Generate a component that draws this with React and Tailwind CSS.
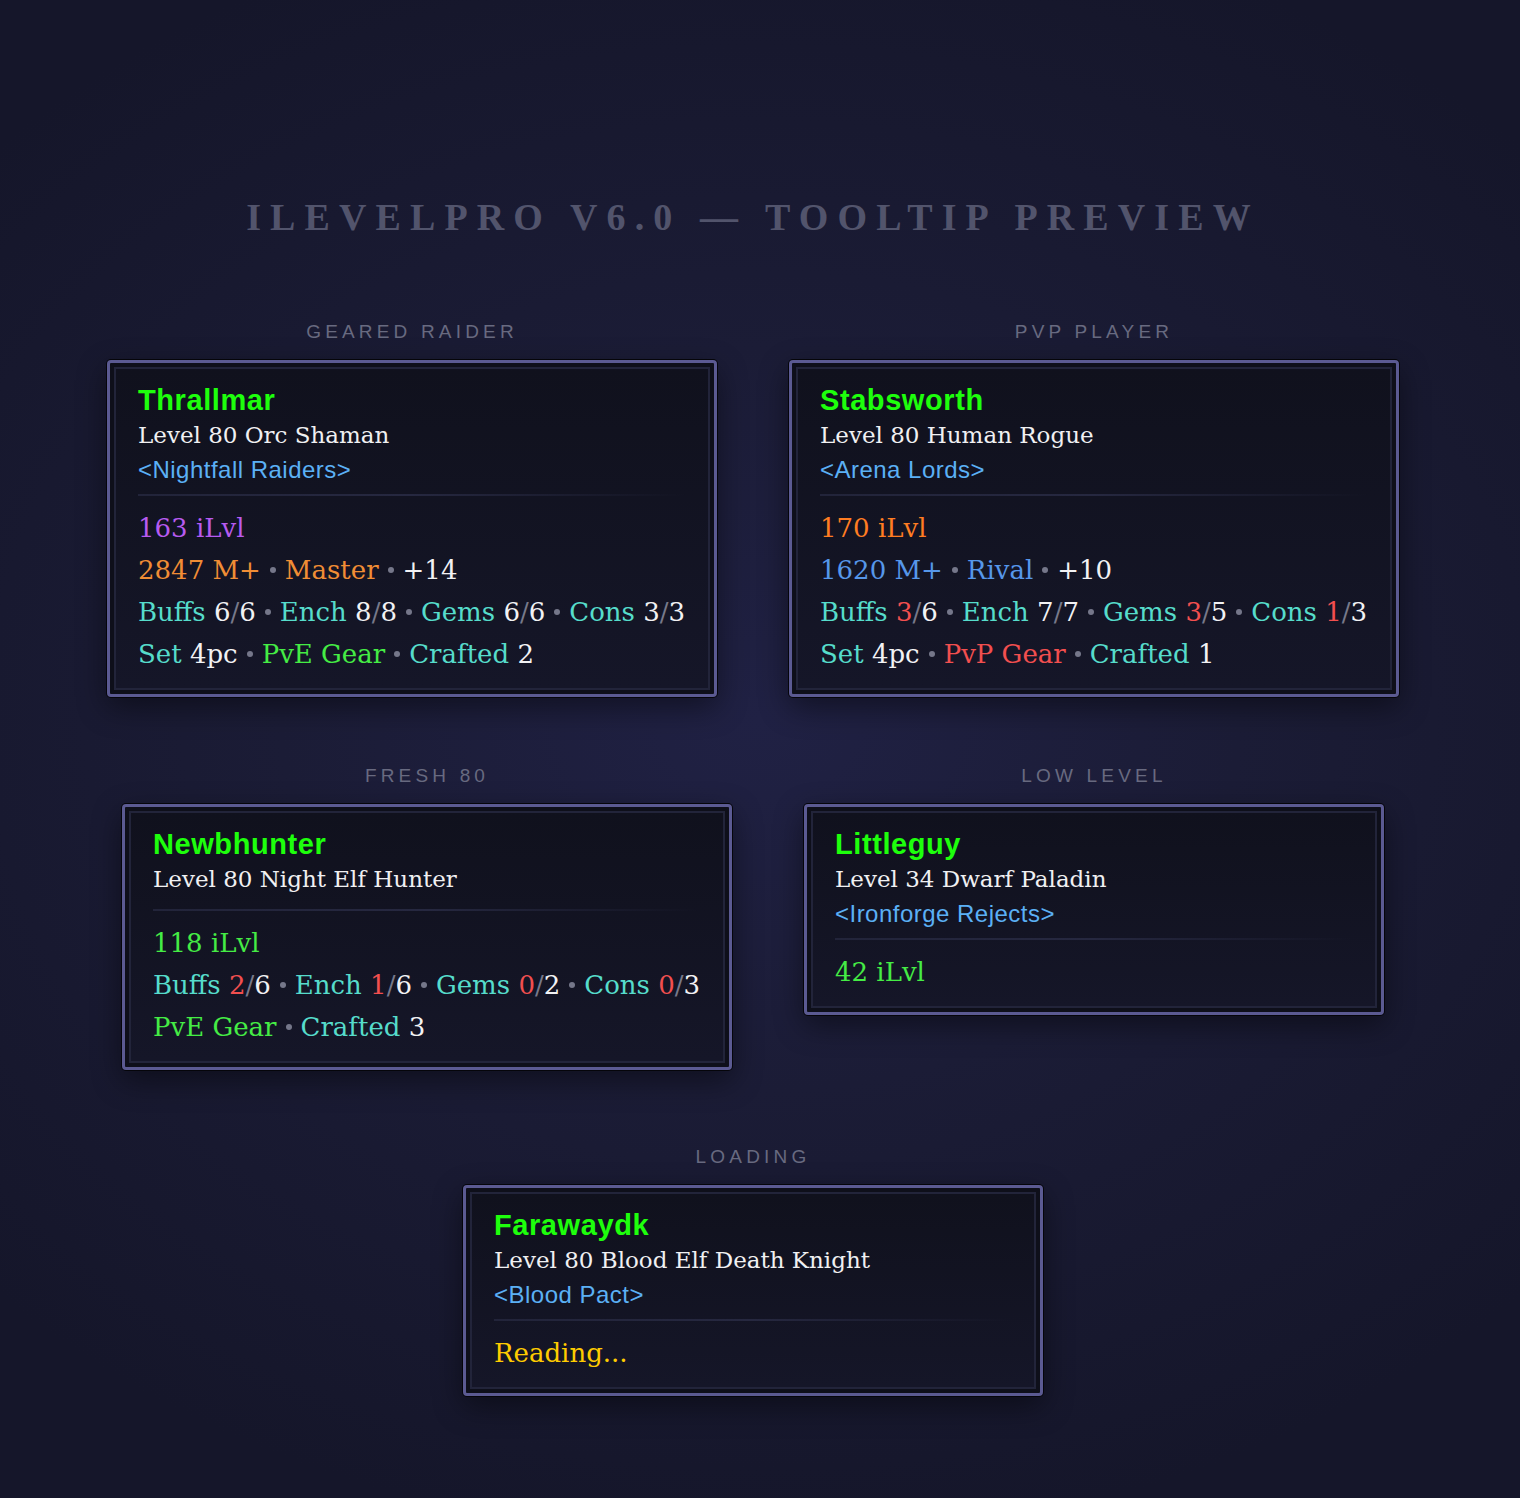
import React from "react";

const serif = "font-['DejaVu_Serif',Georgia,serif]";
const titleFont = "font-['Liberation_Serif',Georgia,serif]";
const sans = "font-['Liberation_Sans',Arial,sans-serif]";

// tooltip text colours
const C = {
  white: "text-[#f2f2f4]",
  teal: "text-[#56dccb]",
  purple: "text-[#b75bf0]",
  orange: "text-[#f08d35]",
  amber: "text-[#ff7d22]",
  blue: "text-[#5697ea]",
  green: "text-[#45ec45]",
  red: "text-[#f24f4f]",
  gold: "text-[#ffcc00]",
};

const count = (label, have, total) => [
  [label, C.teal],
  [" "],
  [String(have), have < total ? C.red : C.white],
  ["/", "text-[#77798a]"],
  [String(total), C.white],
];

const tag = (label, value) => [
  [label, C.teal],
  [" "],
  [value, C.white],
];

const previews = [
  {
    label: "Geared Raider",
    name: "Thrallmar",
    level: "Level 80 Orc Shaman",
    guild: "Nightfall Raiders",
    rows: [
      [[["163 iLvl", C.purple]]],
      [[["2847 M+", C.orange]], [["Master", C.orange]], [["+14", C.white]]],
      [count("Buffs", 6, 6), count("Ench", 8, 8), count("Gems", 6, 6), count("Cons", 3, 3)],
      [tag("Set", "4pc"), [["PvE Gear", C.green]], tag("Crafted", "2")],
    ],
  },
  {
    label: "PvP Player",
    name: "Stabsworth",
    level: "Level 80 Human Rogue",
    guild: "Arena Lords",
    rows: [
      [[["170 iLvl", C.amber]]],
      [[["1620 M+", C.blue]], [["Rival", C.blue]], [["+10", C.white]]],
      [count("Buffs", 3, 6), count("Ench", 7, 7), count("Gems", 3, 5), count("Cons", 1, 3)],
      [tag("Set", "4pc"), [["PvP Gear", C.red]], tag("Crafted", "1")],
    ],
  },
  {
    label: "Fresh 80",
    name: "Newbhunter",
    level: "Level 80 Night Elf Hunter",
    rows: [
      [[["118 iLvl", C.green]]],
      [count("Buffs", 2, 6), count("Ench", 1, 6), count("Gems", 0, 2), count("Cons", 0, 3)],
      [[["PvE Gear", C.green]], tag("Crafted", "3")],
    ],
  },
  {
    label: "Low Level",
    name: "Littleguy",
    level: "Level 34 Dwarf Paladin",
    guild: "Ironforge Rejects",
    rows: [[[["42 iLvl", C.green]]]],
  },
];

const loading = {
  label: "Loading",
  name: "Farawaydk",
  level: "Level 80 Blood Elf Death Knight",
  guild: "Blood Pact",
  rows: [[[["Reading...", C.gold]]]],
};

function StatRow({ groups }) {
  return (
    <div className={`${serif} text-[26px] leading-[42px] whitespace-nowrap`}>
      {groups.map((parts, i) => (
        <React.Fragment key={i}>
          {i > 0 && (
            <span className="mx-[9px] mb-[4px] inline-block h-[6px] w-[6px] rounded-full bg-[#75778a] align-middle" />
          )}
          {parts.map(([text, cls], j) => (
            <span key={j} className={cls}>
              {text}
            </span>
          ))}
        </React.Fragment>
      ))}
    </div>
  );
}

function Tooltip({ name, level, guild, rows }) {
  return (
    <div className="min-w-[580px] rounded-[4px] border-[3px] border-[#5b5a92] bg-[#0e0f1a] p-[4px] shadow-[0_0_0_1px_#05050a,0_10px_30px_rgba(0,0,0,0.45)]">
      <div className="border-2 border-[#22243a] bg-gradient-to-b from-[#10111d] to-[#151628] pl-[22px] pr-[23px] pt-[14px] pb-[13px]">
        <div className={`${sans} text-[29px] leading-[34px] font-bold tracking-[0.02em] text-[#1eff0c]`}>{name}</div>
        <div className={`${serif} text-[23px] leading-[36px] text-[#f0f0f2]`}>{level}</div>
        {guild ? (
          <div className={`${sans} text-[24px] leading-[34px] tracking-[0.02em] text-[#5bb0f5]`}>&lt;{guild}&gt;</div>
        ) : (
          <div className="h-[5px]" />
        )}
        <div className="mt-[7px] mb-[11px] h-[2px] bg-gradient-to-r from-[#22243a] via-[#262840] to-transparent" />
        {rows.map((groups, i) => (
          <StatRow key={i} groups={groups} />
        ))}
      </div>
    </div>
  );
}

function Preview({ label, ...card }) {
  return (
    <div className="flex flex-col items-center">
      <div className={`${sans} mb-3.5 text-[19px] leading-[28px] uppercase tracking-[0.22em] text-[#686a80]`}>
        {label}
      </div>
      <Tooltip {...card} />
    </div>
  );
}

export default function App() {
  return (
    <div className="min-h-screen w-full bg-[#17182b] bg-[radial-gradient(ellipse_70%_55%_at_50%_48%,#202144_0%,#1b1c36_45%,#15162a_100%)] pr-[14px] pt-[198px] pb-[103px]">
      <h1 className={`${titleFont} text-center text-[38px] leading-[38px] font-bold uppercase tracking-[0.24em] text-[#52546c]`}>
        iLevelPro v6.0 — Tooltip Preview
      </h1>

      <div className="mt-[82px] flex flex-wrap items-start justify-center gap-x-[72px] gap-y-[65px]">
        {previews.map((p) => (
          <Preview key={p.name} {...p} />
        ))}
      </div>

      <div className="mt-[73px] flex justify-center">
        <Preview {...loading} />
      </div>
    </div>
  );
}
